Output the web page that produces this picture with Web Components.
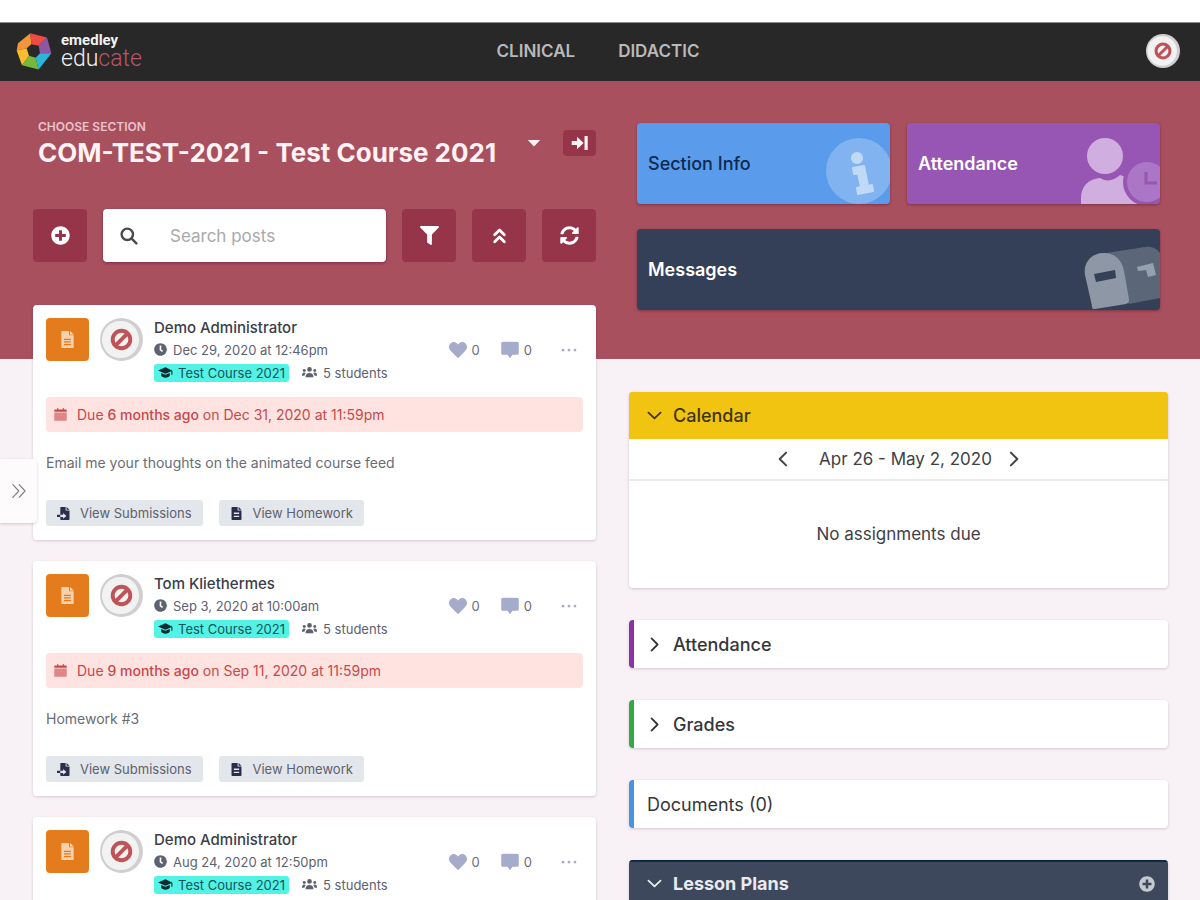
<!DOCTYPE html>
<html lang="en">
<head>
<meta charset="utf-8">
<title>Educate - Course feed</title>
<style>
    html, body {
        height: 100%;
    }

    body {
        margin: 0;
        overflow: hidden;
        background: #f8f2f6;
        color: #3a3d4a;
        font-family: Inter, "Liberation Sans", sans-serif;
        font-size: 13px;
    }
</style>
</head>
<body>
<course-page>
    <app-header slot="header"></app-header>
    <section-picker slot="feed" label="Choose section" name="COM-TEST-2021 - Test Course 2021"></section-picker>
    <feed-toolbar slot="feed"></feed-toolbar>
    <post-card slot="feed" author="Demo Administrator" date="Dec 29, 2020 at 12:46pm" course="Test Course 2021" students="5 students" due="Due <b>6 months ago</b> on Dec 31, 2020 at 11:59pm">Email me your thoughts on the animated course feed</post-card>
    <post-card slot="feed" author="Tom Kliethermes" date="Sep 3, 2020 at 10:00am" course="Test Course 2021" students="5 students" due="Due <b>9 months ago</b> on Sep 11, 2020 at 11:59pm">Homework #3</post-card>
    <post-card slot="feed" author="Demo Administrator" date="Aug 24, 2020 at 12:50pm" course="Test Course 2021" students="5 students"></post-card>

    <quick-tile slot="tiles" art="info" style="--tile: #5a9bec; --ink: #0d2b4e; --weight: 500">Section Info</quick-tile>
    <quick-tile slot="tiles" art="person" style="--tile: #9756b3">Attendance</quick-tile>
    <quick-tile slot="tiles" art="mailbox" wide style="--tile: #334057">Messages</quick-tile>

    <side-panel slot="panels" heading="Calendar" open style="--bar: #f1c411; --ink: #3d3410">
        <week-calendar range="Apr 26 - May 2, 2020">No assignments due</week-calendar>
    </side-panel>
    <side-panel slot="panels" heading="Attendance" style="--edge: #8a33a8"></side-panel>
    <side-panel slot="panels" heading="Grades" style="--edge: #35a847"></side-panel>
    <side-panel slot="panels" heading="Documents (0)" plain style="--edge: #4a92e2; --weight: 400"></side-panel>
    <side-panel slot="panels" heading="Lesson Plans" open add style="--bar: #3e485c; --ink: #e9ebf0; --weight: 700; --top: #0c2a48"></side-panel>

    <drawer-tab slot="drawer"></drawer-tab>
</course-page>

<script>
    const ICONS = {
        plus: '<path d="M256 8C119 8 8 119 8 256s111 248 248 248 248-111 248-248S393 8 256 8zm144 276c0 7-5 12-12 12h-92v92c0 7-5 12-12 12h-56c-7 0-12-5-12-12v-92h-92c-7 0-12-5-12-12v-56c0-7 5-12 12-12h92v-92c0-7 5-12 12-12h56c7 0 12 5 12 12v92h92c7 0 12 5 12 12v56z"/>',
        search: '<g fill="none" stroke="currentColor" stroke-width="68" stroke-linecap="round"><circle cx="208" cy="208" r="162"/><path d="M332 332l134 134"/></g>',
        filter: '<path d="M488 0H24C3 0-8 26 7 41l185 185v206c0 8 4 15 10 20l80 56c16 11 38 0 38-20V226L505 41C520 26 509 0 488 0z"/>',
        up: '<g fill="none" stroke="currentColor" stroke-width="76" stroke-linejoin="round" stroke-linecap="round"><path d="M126 236l130-126 130 126M126 422l130-126 130 126"/></g>',
        sync: '<path d="M370.7 133.3C339.500 104 298.900 88 255.800 88c-77.400 0-144.300 53.200-162.700 126.900-1.400 5.300-6.200 9.100-11.700 9.100H24.100c-7.500 0-13.200-6.800-11.800-14.200C33.900 94.900 134.800 8 256 8c66.400 0 126.800 26.100 171.300 68.700L463 41C478.100 25.900 504 36.600 504 57.900V192c0 13.300-10.700 24-24 24H345.900c-21.300 0-32-25.900-16.900-41l41.700-41.700zM32 296h134.100c21.300 0 32 25.900 16.900 41l-41.700 41.700c31.200 29.300 71.800 45.300 114.800 45.300 77.500-.1 144.400-53.100 162.800-126.800 1.400-5.400 6.200-9.200 11.700-9.200h57.300c7.500 0 13.200 6.800 11.800 14.200C478.100 417.100 377.200 504 256 504c-66.400 0-126.800-26.100-171.300-68.700L49 471C33.900 486.100 8 475.400 8 454.100V320c0-13.300 10.700-24 24-24z"/>',
        caret: '<path d="M30 150h452L256 380z"/>',
        collapse: '<path d="M20 200h150V80l190 176-190 176V312H20zM385 60h90v392h-90z"/>',
        heart: '<path d="M462 63C407 16 326 24 276 76l-20 20-20-20C186 24 104 16 50 63c-63 53-66 149-10 207l193 200c13 13 33 13 46 0l193-200c56-58 53-154-10-207z"/>',
        comment: '<path d="M56 24h400c30 0 50 20 50 50v270c0 30-20 50-50 50H330l-74 94-74-94H56c-30 0-50-20-50-50V74c0-30 20-50 50-50z"/>',
        dots: '<circle cx="66" cy="256" r="44"/><circle cx="256" cy="256" r="44"/><circle cx="446" cy="256" r="44"/>',
        clock: '<path d="M256 8C119 8 8 119 8 256s111 248 248 248 248-111 248-248S393 8 256 8zm92 313l-20 25c-6 7-16 8-23 2l-67-49c-10-8-15-19-15-31V112c0-9 7-16 16-16h32c9 0 16 7 16 16v144l58 42c7 6 9 16 3 23z"/>',
        cap: '<path d="M256 80L0 190l256 110 200-86v120h36V198zM110 270v90c0 40 80 72 146 72s146-32 146-72v-90l-146 64z"/>',
        users: '<circle cx="256" cy="150" r="80"/><circle cx="76" cy="190" r="50"/><circle cx="436" cy="190" r="50"/><path d="M120 420c0-100 50-150 136-150s136 50 136 150zM0 360c0-70 30-100 76-100 20 0 38 6 50 18-26 26-40 56-44 92H0zM512 360c0-70-30-100-76-100-20 0-38 6-50 18 26 26 40 56 44 92h82z"/>',
        calendar: '<path d="M10 150V90c0-20 14-34 34-34h76V10h50v46h172V10h50v46h76c20 0 34 14 34 34v60z"/><path opacity=".6" d="M10 180h492v280c0 26-16 42-42 42H52c-26 0-42-16-42-42z"/>',
        doc: '<path fill-rule="evenodd" opacity=".8" d="M70 30c0-16 12-30 30-30h200v130h142v352c0 18-12 30-30 30H100c-18 0-30-12-30-30zM150 230v40h212v-40zM150 310v40h212v-40zM150 390v40h212v-40z"/><path d="M330 0l112 104H330z"/>',
        homework: '<path fill-rule="evenodd" d="M60 30C60 12 72 0 90 0h210v140h152v342c0 18-12 30-30 30H90c-18 0-30-12-30-30zM150 220v54h212v-54zM150 340v54h212v-54z"/><path d="M336 0l116 104H336z"/>',
        submit: '<path fill-rule="evenodd" d="M130 30c0-18 12-30 30-30h180v140h152v342c0 18-12 30-30 30H160c-18 0-30-12-30-30V390h110v70l130-110-130-110v70H130z"/><path d="M376 0l116 104H376zM0 310h130v80H0z"/>',
        down: '<path fill="none" stroke="currentColor" stroke-width="62" stroke-linecap="round" stroke-linejoin="round" d="M50 160l206 196 206-196"/>',
        right: '<path fill="none" stroke="currentColor" stroke-width="62" stroke-linecap="round" stroke-linejoin="round" d="M156 50l206 206-206 206"/>',
        left: '<path fill="none" stroke="currentColor" stroke-width="62" stroke-linecap="round" stroke-linejoin="round" d="M356 50L150 256l206 206"/>',
        chevrons: '<path fill="none" stroke="currentColor" stroke-width="36" stroke-linecap="round" stroke-linejoin="round" d="M60 50l190 206L60 462M260 50l190 206-190 206"/>'
    };

    // decoration in the right corner of each tile, 80x81
    const ART = {
        info: `<circle cx="49" cy="48" r="33" fill="#fff" opacity=".24"/>
            <g fill="#fff" opacity=".5"><circle cx="47" cy="35" r="6"/><path stroke="#fff" stroke-width="2" stroke-linejoin="round" d="M43 45l11-2 4 20 4-1 1 6-15 3-1-6 4-1-3-14-4 1z"/></g>`,
        person: `<g fill="#d0afe0"><circle cx="25" cy="33" r="18"/><path d="M1 81v-6c0-11 7-19 19-20 6 4 14 3 20-3l12 4 8 25z"/></g>
            <circle cx="67" cy="59" r="22" fill="#ab76c6" stroke="#9756b3" stroke-width="4"/>
            <path fill="none" stroke="#9756b3" stroke-width="3" d="M66 49v11h11"/>`,
        mailbox: `<path fill="#5b6779" d="M20 25l45-7c7-1 12 2 15 6v45l-31 6z"/>
            <path fill="#8d97a6" d="M5 46C3 34 11 25 22 24c11-1 20 6 22 18l5 28c0 3 0 4-3 5l-31 5c-2 0-3 0-3-3z"/>
            <path fill="#334057" d="M14 45l21-4 1 8-20 4z"/>
            <path fill="#97a0ad" d="M57 38l16-4 3 12-8 2-2-7-8 1z"/>`
    };

    const AVATAR = `<svg viewBox="0 0 44 44" aria-hidden="true">
            <circle cx="22" cy="22" r="22" fill="#cfcfd1"/>
            <circle cx="21" cy="22" r="19" fill="#f3f2f2"/>
            <g fill="none" stroke="#bd5457" stroke-width="4"><circle cx="22" cy="22" r="9"/><path d="M15.500 28.500l13-13"/></g>
        </svg>`;

    class AppIcon extends HTMLElement {

        constructor() {
            super();
            this.shadow = this.attachShadow({mode: 'open'});
        }

        connectedCallback() {
            this.shadow.innerHTML =
            `
            <style>
                :host {
                    display: inline-flex;
                    flex: none;
                    width: var(--size, 16px);
                    height: var(--size, 16px);
                }

                svg {
                    width: 100%;
                    height: 100%;
                    fill: currentColor;
                }
            </style>
            <svg viewBox="0 0 512 512" aria-hidden="true">${ICONS[this.getAttribute('name')]}</svg>
            `;
        }
    }

    class CoursePage extends HTMLElement {

        constructor() {
            super();
            this.shadow = this.attachShadow({mode: 'open'});
            this.render();
        }

        render() {
            this.shadow.innerHTML =
            `
            <style>
                :host {
                    display: block;
                    position: relative;
                    min-height: 100%;
                }

                main {
                    display: grid;
                    grid-template-columns: minmax(0, 563fr) minmax(0, 539fr);
                    gap: 33px;
                    align-items: start;
                    padding: 0 32px 0 33px;
                    background: linear-gradient(#a9505f 278px, transparent 278px);
                }

                .feed {
                    display: flex;
                    flex-direction: column;
                    gap: 21px;
                    padding-top: 36px;
                }

                .tiles {
                    display: grid;
                    grid-template-columns: 1fr 1fr;
                    gap: 25px 17px;
                    padding: 42px 8px 82px;
                }

                .panels {
                    display: flex;
                    flex-direction: column;
                    gap: 32px;
                }
            </style>
            <slot name="header"></slot>
            <main>
                <section class="feed"><slot name="feed"></slot></section>
                <aside>
                    <div class="tiles"><slot name="tiles"></slot></div>
                    <div class="panels"><slot name="panels"></slot></div>
                </aside>
            </main>
            <slot name="drawer"></slot>
            `;
        }
    }

    class AppHeader extends HTMLElement {

        constructor() {
            super();
            this.shadow = this.attachShadow({mode: 'open'});
            this.render();
        }

        render() {
            this.shadow.innerHTML =
            `
            <style>
                :host {
                    display: block;
                    padding-top: 22px;
                    background: #fff;
                }

                header {
                    display: grid;
                    grid-template-columns: 1fr auto 1fr;
                    align-items: center;
                    height: 56px;
                    padding: 0 20px 2px 16px;
                    border-top: 1px solid #8d8d8d;
                    background: #282828;
                }

                .brand {
                    display: flex;
                    align-items: center;
                    gap: 9px;
                    color: #f2f2f2;
                    font-family: Roboto, sans-serif;
                    text-decoration: none;
                }

                .brand svg {
                    width: 36px;
                    height: 37px;
                }

                .brand strong, .brand span {
                    display: block;
                }

                .brand strong {
                    font-size: 15px;
                    font-weight: 700;
                    line-height: 16px;
                }

                .brand span {
                    font-size: 23px;
                    font-weight: 300;
                    line-height: 22px;
                }

                .brand em {
                    color: #b8566b;
                    font-style: normal;
                }

                nav {
                    display: flex;
                    gap: 43px;
                }

                nav a {
                    color: #b9b9b9;
                    font-size: 17px;
                    font-weight: 600;
                    text-decoration: none;
                }

                button {
                    justify-self: end;
                    display: flex;
                    padding: 0;
                    border: 0;
                    background: none;
                }

                button svg {
                    width: 34px;
                    height: 34px;
                }
            </style>
            <header>
                <a class="brand" href="#home">
                    <svg viewBox="0 0 108 110" aria-hidden="true">
                        <path fill="#f2953d" d="M6 30L43 0l3 33-14 12L2 52z"/>
                        <path fill="#ef4b41" d="M43 0l50 13-25 25-22-5z"/>
                        <path fill="#8d57a6" d="M93 13l13 47-34 0-4-22z"/>
                        <path fill="#2bb5dc" d="M106 60l-38 49-9-35 13-14z"/>
                        <path fill="#76b83b" d="M68 109l-50-13 21-28 20 6z"/>
                        <path fill="#f8bd2e" d="M18 96L2 52l30-7 7 23z"/>
                    </svg>
                    <div><strong>emedley</strong><span>edu<em>cate</em></span></div>
                </a>
                <nav>
                    <a href="#clinical">CLINICAL</a>
                    <a href="#didactic">DIDACTIC</a>
                </nav>
                <button type="button" aria-label="Account">${AVATAR}</button>
            </header>
            `;
        }
    }

    class SectionPicker extends HTMLElement {

        constructor() {
            super();
            this.shadow = this.attachShadow({mode: 'open'});
        }

        connectedCallback() {
            this.render();
        }

        render() {
            this.shadow.innerHTML =
            `
            <style>
                :host {
                    display: flex;
                    align-items: center;
                    justify-content: space-between;
                    height: 52px;
                    padding-left: 5px;
                    margin-bottom: 19px;
                    color: #fdf3f4;
                }

                button {
                    display: flex;
                    align-items: center;
                    padding: 0;
                    border: 0;
                    background: none;
                    color: inherit;
                    font: inherit;
                    text-align: left;
                }

                .choose {
                    flex: 1;
                    justify-content: space-between;
                    padding-right: 22px;
                }

                .choose span {
                    padding-top: 4px;
                }

                small {
                    display: block;
                    color: #e8c3ca;
                    font-size: 12px;
                    font-weight: 600;
                    line-height: 16px;
                    text-transform: uppercase;
                }

                strong {
                    display: block;
                    font-size: 26px;
                    font-weight: 700;
                    line-height: 36px;
                }

                .choose app-icon {
                    --size: 14px;
                }

                .jump {
                    justify-content: center;
                    width: 33px;
                    height: 26px;
                    border-radius: 4px;
                    background: #963549;
                    --size: 18px;
                }
            </style>
            <button class="choose" type="button">
                <span><small>${this.getAttribute('label')}</small><strong>${this.getAttribute('name')}</strong></span>
                <app-icon name="caret"></app-icon>
            </button>
            <button class="jump" type="button" aria-label="Go to section"><app-icon name="collapse"></app-icon></button>
            `;
        }
    }

    class FeedToolbar extends HTMLElement {

        constructor() {
            super();
            this.shadow = this.attachShadow({mode: 'open'});
            this.render();
        }

        render() {
            this.shadow.innerHTML =
            `
            <style>
                :host {
                    display: flex;
                    gap: 16px;
                    height: 53px;
                    margin-bottom: 22px;
                }

                button {
                    display: flex;
                    flex: none;
                    align-items: center;
                    justify-content: center;
                    width: 54px;
                    padding: 0;
                    border: 0;
                    border-radius: 4px;
                    background: #963549;
                    color: #fff;
                    --size: 19px;
                }

                label {
                    flex: 1;
                    display: flex;
                    align-items: center;
                    gap: 32px;
                    min-width: 0;
                    padding: 0 17px;
                    border-radius: 4px;
                    background: #fff;
                    color: #4b4b4b;
                    box-shadow: 0 1px 3px rgba(90, 10, 30, .5);
                    --size: 18px;
                }

                input {
                    flex: 1;
                    min-width: 0;
                    padding: 0;
                    border: 0;
                    outline: 0;
                    background: none;
                    font: 17px Inter, sans-serif;
                }

                input::placeholder {
                    color: #a9a9a9;
                }
            </style>
            <button type="button" aria-label="New post"><app-icon name="plus"></app-icon></button>
            <label>
                <app-icon name="search"></app-icon>
                <input type="search" placeholder="Search posts" aria-label="Search posts">
            </label>
            <button type="button" aria-label="Filter"><app-icon name="filter"></app-icon></button>
            <button type="button" aria-label="Collapse all"><app-icon name="up"></app-icon></button>
            <button type="button" aria-label="Refresh"><app-icon name="sync"></app-icon></button>
            `;
        }
    }

    class PostCard extends HTMLElement {

        constructor() {
            super();
            this.shadow = this.attachShadow({mode: 'open'});
        }

        connectedCallback() {
            this.render();
        }

        render() {
            let due = this.getAttribute('due');
            let details = due ? `
                <p class="due"><app-icon name="calendar"></app-icon><span>${due}</span></p>
                <p class="text"><slot></slot></p>
                <footer>
                    <button type="button"><app-icon name="submit"></app-icon>View Submissions</button>
                    <button type="button"><app-icon name="homework"></app-icon>View Homework</button>
                </footer>` : '';

            this.shadow.innerHTML =
            `
            <style>
                :host {
                    display: block;
                    box-sizing: border-box;
                    min-height: 235px;
                    padding: 13px;
                    border-radius: 4px;
                    background: #fff;
                    box-shadow: 0 1px 3px rgba(60, 30, 50, .2);
                }

                header {
                    display: flex;
                    gap: 11px;
                    height: 66px;
                }

                .type {
                    display: flex;
                    align-items: center;
                    justify-content: center;
                    width: 43px;
                    height: 43px;
                    border-radius: 4px;
                    background: #e47c1e;
                    color: #fbe6d0;
                    --size: 17px;
                }

                header > svg {
                    width: 43px;
                    height: 43px;
                }

                .who {
                    flex: 1;
                }

                h2 {
                    margin: 0;
                    color: #3a3d4a;
                    font-size: 15px;
                    font-weight: 500;
                    line-height: 20px;
                }

                .line {
                    display: flex;
                    align-items: center;
                    height: 23px;
                    gap: 6px;
                    color: #5e6170;
                    --size: 13px;
                }

                .tag {
                    display: flex;
                    align-items: center;
                    gap: 5px;
                    margin-right: 7px;
                    padding: 0 4px;
                    border-radius: 3px;
                    background: #52f2e4;
                    color: #12555c;
                    line-height: 18px;
                    text-decoration: none;
                    --size: 15px;
                }

                .tag app-icon {
                    color: #0b2c33;
                }

                .students {
                    --size: 15px;
                }

                .actions {
                    display: flex;
                    align-items: center;
                    gap: 21px;
                    height: 63px;
                    padding-right: 6px;
                    --size: 18px;
                }

                .actions button {
                    display: flex;
                    align-items: center;
                    gap: 5px;
                    padding: 0;
                    border: 0;
                    background: none;
                    color: #6a6c78;
                    font: inherit;
                }

                .actions app-icon {
                    color: #a6abcb;
                }

                .actions button:last-child {
                    margin-left: 8px;
                    --size: 16px;
                }

                p {
                    margin: 0;
                }

                .due {
                    display: flex;
                    align-items: center;
                    gap: 10px;
                    height: 35px;
                    margin-top: 13px;
                    padding: 0 8px;
                    border-radius: 4px;
                    background: #fee3e0;
                    color: #c8494b;
                    font-size: 14px;
                    --size: 13px;
                }

                .due b {
                    font-weight: 500;
                }

                .text {
                    margin: 21px 0 27px;
                    color: #6a6c76;
                    font-size: 14px;
                    line-height: 20px;
                }

                footer {
                    display: flex;
                    gap: 16px;
                }

                footer button {
                    display: flex;
                    align-items: center;
                    gap: 10px;
                    height: 26px;
                    padding: 0 11px;
                    border: 0;
                    border-radius: 3px;
                    background: #e3e6ea;
                    color: #5c6070;
                    font: inherit;
                    --size: 13px;
                }

                footer app-icon {
                    color: #2b2d4d;
                }
            </style>
            <header>
                <span class="type"><app-icon name="doc"></app-icon></span>
                ${AVATAR}
                <div class="who">
                    <h2>${this.getAttribute('author')}</h2>
                    <div class="line"><app-icon name="clock"></app-icon>${this.getAttribute('date')}</div>
                    <div class="line">
                        <a class="tag" href="#course"><app-icon name="cap"></app-icon>${this.getAttribute('course')}</a>
                        <app-icon class="students" name="users"></app-icon>${this.getAttribute('students')}
                    </div>
                </div>
                <div class="actions">
                    <button type="button"><app-icon name="heart"></app-icon>0</button>
                    <button type="button"><app-icon name="comment"></app-icon>0</button>
                    <button type="button" aria-label="More"><app-icon name="dots"></app-icon></button>
                </div>
            </header>
            ${details}
            `;
        }
    }

    class QuickTile extends HTMLElement {

        constructor() {
            super();
            this.shadow = this.attachShadow({mode: 'open'});
        }

        connectedCallback() {
            this.shadow.innerHTML =
            `
            <style>
                :host {
                    display: block;
                }

                :host([wide]) {
                    grid-column: 1 / -1;
                }

                a {
                    display: flex;
                    align-items: center;
                    justify-content: space-between;
                    height: 81px;
                    padding-left: 11px;
                    overflow: hidden;
                    border-radius: 4px;
                    background: var(--tile);
                    box-shadow: 0 1px 3px rgba(60, 10, 30, .4);
                    color: var(--ink, #fff);
                    font-size: 18px;
                    font-weight: var(--weight, 600);
                    text-decoration: none;
                }

                svg {
                    width: 80px;
                    height: 81px;
                }
            </style>
            <a href="#${this.getAttribute('art')}">
                <slot></slot>
                <svg viewBox="0 0 80 81" aria-hidden="true">${ART[this.getAttribute('art')]}</svg>
            </a>
            `;
        }
    }

    class SidePanel extends HTMLElement {

        constructor() {
            super();
            this.shadow = this.attachShadow({mode: 'open'});
        }

        connectedCallback() {
            this.render();
        }

        render() {
            let open = this.hasAttribute('open');
            let arrow = this.hasAttribute('plain') ? '' : `<app-icon name="${open ? 'down' : 'right'}"></app-icon>`;
            let add = this.hasAttribute('add') ? '<button class="add" type="button" aria-label="Add"><app-icon name="plus"></app-icon></button>' : '';

            this.shadow.innerHTML =
            `
            <style>
                :host {
                    display: block;
                    overflow: hidden;
                    border-radius: 4px;
                    background: #fff;
                    box-shadow: 0 1px 3px rgba(60, 30, 50, .2);
                }

                .bar {
                    display: flex;
                    align-items: center;
                    height: 48px;
                    box-sizing: border-box;
                    border-left: 5px solid var(--edge);
                    padding: 0 13px;
                }

                :host([open]) .bar {
                    height: 47px;
                    padding-left: 18px;
                    border-left: 0;
                    background: var(--bar);
                    box-shadow: inset 0 2px var(--top, var(--bar));
                }

                h2 {
                    flex: 1;
                    margin: 0;
                    font-size: 18px;
                }

                button {
                    display: flex;
                    align-items: center;
                    gap: 11px;
                    padding: 0;
                    border: 0;
                    background: none;
                    color: var(--ink, #35363b);
                    font: inherit;
                    font-weight: var(--weight, 500);
                    --size: 15px;
                }

                .add {
                    color: #c5c9d0;
                    --size: 16px;
                }
            </style>
            <div class="bar">
                <h2><button type="button" aria-expanded="${open}">${arrow}${this.getAttribute('heading')}</button></h2>
                ${add}
            </div>
            <slot></slot>
            `;
        }
    }

    class WeekCalendar extends HTMLElement {

        constructor() {
            super();
            this.shadow = this.attachShadow({mode: 'open'});
        }

        connectedCallback() {
            this.shadow.innerHTML =
            `
            <style>
                :host {
                    display: block;
                    color: #404147;
                    font-size: 17px;
                }

                .week {
                    display: flex;
                    align-items: center;
                    justify-content: center;
                    gap: 14px;
                    height: 40px;
                    border-bottom: 2px solid #ebe9eb;
                }

                button {
                    display: flex;
                    padding: 0;
                    border: 0;
                    background: none;
                    color: inherit;
                    --size: 16px;
                }

                button:first-child {
                    margin-right: 14px;
                }

                p {
                    margin: 0;
                    line-height: 107px;
                    text-align: center;
                }
            </style>
            <div class="week">
                <button type="button" aria-label="Previous week"><app-icon name="left"></app-icon></button>
                <span>${this.getAttribute('range')}</span>
                <button type="button" aria-label="Next week"><app-icon name="right"></app-icon></button>
            </div>
            <p><slot></slot></p>
            `;
        }
    }

    class DrawerTab extends HTMLElement {

        constructor() {
            super();
            this.shadow = this.attachShadow({mode: 'open'});
            this.shadow.innerHTML =
            `
            <style>
                :host {
                    display: block;
                    position: absolute;
                    left: 0;
                    top: 459px;
                }

                button {
                    display: flex;
                    align-items: center;
                    justify-content: center;
                    width: 37px;
                    height: 64px;
                    padding: 0;
                    border: 0;
                    border-radius: 0 4px 4px 0;
                    background: #fdfbfc;
                    box-shadow: 0 1px 3px rgba(60, 30, 50, .2);
                    color: #7d7d82;
                    --size: 16px;
                }
            </style>
            <button type="button" aria-label="Open menu"><app-icon name="chevrons"></app-icon></button>
            `;
        }
    }

    customElements.define('app-icon', AppIcon);
    customElements.define('course-page', CoursePage);
    customElements.define('app-header', AppHeader);
    customElements.define('section-picker', SectionPicker);
    customElements.define('feed-toolbar', FeedToolbar);
    customElements.define('post-card', PostCard);
    customElements.define('quick-tile', QuickTile);
    customElements.define('side-panel', SidePanel);
    customElements.define('week-calendar', WeekCalendar);
    customElements.define('drawer-tab', DrawerTab);
</script>
</body>
</html>
